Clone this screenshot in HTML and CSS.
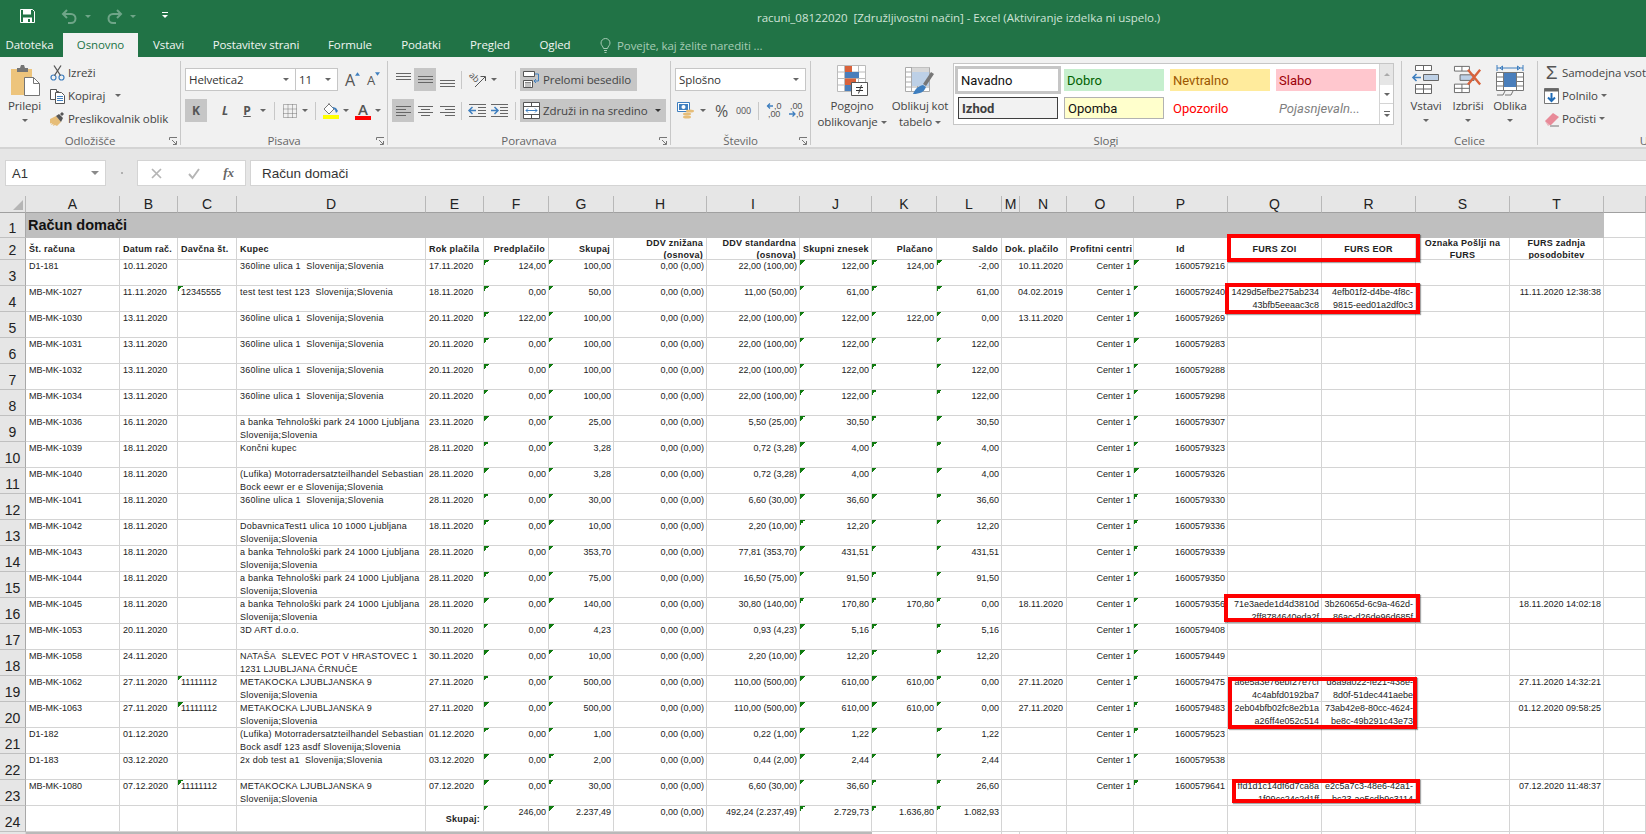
FILE: index.html
```html
<!DOCTYPE html>
<html lang="sl">
<head>
<meta charset="utf-8">
<title>racuni_08122020 - Excel</title>
<link rel="stylesheet" href="styles.css">
</head>
<body>
<header class="titlebar">
  <svg class="qa-save" viewBox="0 0 15 14"><path d="M.5.500h12l2 2v11H.5z" fill="none" stroke="#fff"/><path d="M3 .5h8v5H3zM3 8.500h9v5H3z" fill="#fff"/><path d="M8 10h2v3H8z" fill="#217346"/></svg>
  <svg class="qa-undo" viewBox="0 0 15 14"><path d="M5 1 1 5l4 4M1.500 5H9a4.500 4.500 0 0 1 0 9H6" fill="none" stroke="#6fa588" stroke-width="2"/></svg>
  <i class="caret dim"></i>
  <svg class="qa-redo" viewBox="0 0 15 14"><path d="m10 1 4 4-4 4M13.500 5H6a4.500 4.500 0 0 0 0 9h3" fill="none" stroke="#6fa588" stroke-width="2"/></svg>
  <i class="caret dim"></i>
  <svg class="qa-more" viewBox="0 0 7 7"><path d="M0 .5h6" stroke="#fff"/><path d="m0 3 3 3 3-3z" fill="#fff"/></svg>
  <div class="doc-title">racuni_08122020&nbsp; [Združljivostni način] - Excel (Aktiviranje izdelka ni uspelo.)</div>
</header>

<nav class="tabs">
  <span class="tab">Datoteka</span>
  <span class="tab active">Osnovno</span>
  <span class="tab">Vstavi</span>
  <span class="tab">Postavitev strani</span>
  <span class="tab">Formule</span>
  <span class="tab">Podatki</span>
  <span class="tab">Pregled</span>
  <span class="tab">Ogled</span>
  <span class="tell">
    <svg class="bulb" viewBox="0 0 11 15"><path d="M3.500 10.500C3 8 1 7.500 1 5a4.500 4.500 0 0 1 9 0c0 2.500-2 3-2.500 5.500zM4 12.500h3M4.500 14.500h2" fill="none" stroke="#a6cbb5"/></svg>
    Povejte, kaj želite narediti ...
  </span>
</nav>

<section class="ribbon">
  <div class="grp g-clip">
    <div class="body">
      <div class="big-btn paste">
        <svg class="ic-paste" viewBox="0 0 30 31"><path d="M0 4h21v26H0z" fill="#edc47c"/><path d="M6 3h3l1-3h3l1 3h3v4H6z" fill="#757575"/><path d="M13.500 12.500h9l6 6v12h-15z" fill="#fff" stroke="#757575"/><path d="M22.500 12.500v6h6" fill="none" stroke="#757575"/></svg>
        <span>Prilepi</span>
        <i class="caret low"></i>
      </div>
      <ul class="clip-list">
        <li><svg class="ic15" viewBox="0 0 15 16"><circle cx="3.500" cy="12.500" r="2.500" fill="none" stroke="#3f7fbf" stroke-width="1.200"/><circle cx="11.500" cy="12.500" r="2.500" fill="none" stroke="#3f7fbf" stroke-width="1.200"/><path d="M4.500 10.500 11 .5M10.500 10.500 4 .5" stroke="#555" stroke-width="1.300"/></svg>Izreži</li>
        <li><svg class="ic15" viewBox="0 0 15 16"><path d="M.5 1.500h6v2h2v8h-8z" fill="#fff" stroke="#555"/><path d="M5.500 4.500h6l3 3v8h-9z" fill="#fff" stroke="#555"/><path d="M7 8.500h6M7 10.500h6M7 12.500h6" stroke="#3f7fbf"/></svg>Kopiraj <i class="caret wide"></i></li>
        <li><svg class="ic15" viewBox="0 0 15 16"><path d="M0 8 6 5l5 6-4 4-2-1-2 1 .5-2L1 14l1-2-2 .5z" fill="#e6bd78"/><path d="m6 5 3-2 4 4-2 4z" fill="#555"/><path d="m10 3 2-2 2 2-2 2z" fill="#555"/></svg>Preslikovalnik oblik</li>
      </ul>
    </div>
    <div class="label"><span></span><span>Odložišče</span><svg class="launch" viewBox="0 0 8 8"><path d="M.5 3V.5H8M3 3l4 4M4 7.500h3.500V4" fill="none" stroke="#777"/></svg></div>
  </div>

  <div class="grp g-font">
    <div class="body stack">
      <div class="line">
        <div class="combo fontname">Helvetica2<i class="caret"></i></div>
        <div class="combo fontsize">11<i class="caret"></i></div>
        <span class="abc grow">A<svg viewBox="0 0 6 4"><path d="M0 4 3 0l3 4z" fill="#3f7fbf"/></svg></span>
        <span class="abc shrink">A<svg viewBox="0 0 6 4"><path d="M0 0h6L3 4z" fill="#3f7fbf"/></svg></span>
      </div>
      <div class="line">
        <b class="sq on">K</b><b class="sq ital">L</b><b class="sq under">P</b><i class="caret m2"></i><s class="sep s-a"></s>
        <svg class="ic-border" viewBox="0 0 14 14"><path d="M.5.500h13v13H.5zM.5 5h13M.5 9.500h13M5 .500v13M9.500.500v13" fill="none" stroke="#777" stroke-dasharray="1 1"/></svg>
        <i class="caret m5"></i><s class="sep s-b"></s>
        <span class="fill"><svg viewBox="0 0 16 12"><path d="M6 1 1 6l5 5 5-5zM6 1V0" fill="#fff" stroke="#777"/><path d="m9 4 3 3 1 3 2-2-2-3-3-1z" fill="#3f7fbf"/></svg><em class="bar yellow"></em></span>
        <i class="caret m4"></i>
        <span class="fcolor">A<em class="bar red"></em></span>
        <i class="caret m4"></i>
      </div>
    </div>
    <div class="label"><span></span><span>Pisava</span><svg class="launch" viewBox="0 0 8 8"><path d="M.5 3V.5H8M3 3l4 4M4 7.500h3.500V4" fill="none" stroke="#777"/></svg></div>
  </div>

  <div class="grp g-align">
    <div class="body stack">
      <div class="line">
        <span class="cell22"><svg class="ic-al" viewBox="0 0 15 16"><path d="M0 1.500h15M0 4.500h15M0 7.500h15" stroke="#666"/></svg></span>
        <span class="cell22 on"><svg class="ic-al" viewBox="0 0 15 16"><path d="M0 4.500h15M0 7.500h15M0 10.500h15" stroke="#666"/></svg></span>
        <span class="cell22"><svg class="ic-al" viewBox="0 0 15 16"><path d="M0 8.500h15M0 11.500h15M0 14.500h15" stroke="#666"/></svg></span>
        <s class="sep s-c"></s>
        <svg class="ic-orient" viewBox="0 0 17 16"><text x="1" y="6" transform="rotate(45 3 3)" class="svgtxt">ab</text><path d="M6 15 16 5M11.500 4.500h5V9" fill="none" stroke="#555"/></svg>
        <i class="caret m5"></i>
        <s class="sep s-d"></s>
        <span class="wide-btn wrap"><svg class="ic-wrap" viewBox="0 0 17 17"><path d="M.5.500h11v5H.5zM.5 9.500h9v7H.5z" fill="#fff" stroke="#555"/><path d="M2 13h6M2 11.500h6M2 15h6" stroke="#555" stroke-width=".7"/><path d="M12 3h3.500v7H11m2-2-2 2 2 2" fill="none" stroke="#3f7fbf"/></svg>Prelomi besedilo</span>
      </div>
      <div class="line">
        <span class="cell22 on"><svg class="ic-al" viewBox="0 0 15 16"><path d="M0 3.500h15M0 6.500h10M0 9.500h15M0 12.500h10" stroke="#666"/></svg></span>
        <span class="cell22"><svg class="ic-al" viewBox="0 0 15 16"><path d="M0 3.500h15M3 6.500h9M0 9.500h15M3 12.500h9" stroke="#666"/></svg></span>
        <span class="cell22"><svg class="ic-al" viewBox="0 0 15 16"><path d="M0 3.500h15M5 6.500h10M0 9.500h15M5 12.500h10" stroke="#666"/></svg></span>
        <s class="sep s-c"></s>
        <svg class="ic-ind" viewBox="0 0 17 15"><path d="M0 1.500h17M9 4.500h8M9 7.500h8M9 10.500h8M0 13.500h17" stroke="#666"/><path d="M0 7.500h7M3.500 4 0 7.500 3.500 11" fill="none" stroke="#3f7fbf" stroke-width="1.500"/></svg>
        <svg class="ic-ind r" viewBox="0 0 17 15"><path d="M0 1.500h17M9 4.500h8M9 7.500h8M9 10.500h8M0 13.500h17" stroke="#666"/><path d="M0 7.500h7M3.500 4 7 7.500 3.500 11" fill="none" stroke="#3f7fbf" stroke-width="1.500"/></svg>
        <s class="sep s-e"></s>
        <span class="wide-btn merge"><svg class="ic-wrap" viewBox="0 0 17 17"><path d="M.5.500h16v16H.5zM.5 4.500h16M.5 12.500h16M8.500.500v4M8.500 12.500v4" fill="#fff" stroke="#555"/><path d="M3 8.500h11M5 6.500l-2 2 2 2M12 6.500l2 2-2 2" fill="none" stroke="#3f7fbf"/></svg>Združi in na sredino<i class="caret dark"></i></span>
      </div>
    </div>
    <div class="label"><span></span><span>Poravnava</span><svg class="launch" viewBox="0 0 8 8"><path d="M.5 3V.5H8M3 3l4 4M4 7.500h3.500V4" fill="none" stroke="#777"/></svg></div>
  </div>

  <div class="grp g-num">
    <div class="body stack">
      <div class="line">
        <div class="combo numfmt">Splošno<i class="caret"></i></div>
      </div>
      <div class="line">
        <svg class="ic-acc" viewBox="0 0 18 17"><path d="M.5.500h12v9H.5z" fill="#fff" stroke="#3f7fbf"/><path d="M2 2h9v6H2z" fill="#3f7fbf"/><circle cx="6.500" cy="5" r="2" fill="#fff"/><ellipse cx="13" cy="9" rx="4" ry="1.500" fill="#e6bd78"/><ellipse cx="10" cy="12" rx="4" ry="1.500" fill="#e6bd78"/><ellipse cx="10" cy="15" rx="4" ry="1.500" fill="#e6bd78"/></svg>
        <i class="caret m5"></i>
        <span class="pct">%</span>
        <span class="thou">000</span>
        <s class="sep s-f"></s>
        <svg class="ic-dec" viewBox="0 0 15 17"><text x="7" y="7" class="svgnum">,0</text><text x="1" y="15" class="svgnum">,00</text><path d="M0 4h6M3 1.500 .5 4 3 6.500" fill="none" stroke="#3f7fbf" stroke-width="1.300"/></svg>
        <svg class="ic-dec r" viewBox="0 0 15 17"><text x="1" y="7" class="svgnum">,00</text><text x="7" y="15" class="svgnum">,0</text><path d="M0 12h6M3.500 9.500 6 12l-2.500 2.500" fill="none" stroke="#3f7fbf" stroke-width="1.300"/></svg>
      </div>
    </div>
    <div class="label"><span></span><span>Število</span><svg class="launch" viewBox="0 0 8 8"><path d="M.5 3V.5H8M3 3l4 4M4 7.500h3.500V4" fill="none" stroke="#777"/></svg></div>
  </div>

  <div class="grp g-styles">
    <div class="body">
      <div class="big-btn cond">
        <svg class="ic-cond" viewBox="0 0 31 31"><path d="M.5.500h28v26H.5zM.5 7h28M.5 13.500h28M.5 20h28M7.500.500v26M21.500.500v26" fill="#fff" stroke="#bbb"/><path d="M8 1h7v6H8z" fill="#d9623b"/><path d="M8 7h14v6H8z" fill="#4a7ebb"/><path d="M8 13.500h11V20H8z" fill="#d9623b"/><path d="M8 20h6v6H8z" fill="#4a7ebb"/><path d="M14.500 17.500h16v13h-16z" fill="#fff" stroke="#555"/><path d="M19 22.500h7M19 25.500h7M24.500 20l-3 8.500" stroke="#333" fill="none"/></svg>
        <span>Pogojno</span>
        <span>oblikovanje<i class="caret tight"></i></span>
      </div>
      <div class="big-btn tbl">
        <svg class="ic-tbl" viewBox="0 0 30 28"><path d="M.5.500h24v24H.5zM.5 5h24M.5 10h24M.5 15h24M.5 20h24M6.500.500v24M12.500.500v24M18.500.500v24" fill="#fff" stroke="#aaa"/><path d="M7 5h17v14H7z" fill="#bdd0e6"/><path d="M7 .500h17V5H7z" fill="#d8d8d8"/><path d="m18 17 8-12 3 2-8 12z" fill="#777"/><path d="M8 27c2-5 5-8 10-9l3 2c-2 5-6 7-13 7z" fill="#3f7fbf"/></svg>
        <span>Oblikuj kot</span>
        <span>tabelo<i class="caret tight"></i></span>
      </div>
      <div class="gallery">
        <div class="swatches">
          <span class="sw normal">Navadno</span>
          <span class="sw good">Dobro</span>
          <span class="sw neutral">Nevtralno</span>
          <span class="sw bad">Slabo</span>
          <span class="sw output">Izhod</span>
          <span class="sw note">Opomba</span>
          <span class="sw warn">Opozorilo</span>
          <span class="sw expl">Pojasnjevaln...</span>
        </div>
        <div class="scroller">
          <span class="up"><i class="caret flip pale"></i></span>
          <span class="dn"><i class="caret"></i></span>
          <span class="mr"><em class="dash"></em><i class="caret"></i></span>
        </div>
      </div>
    </div>
    <div class="label plain">Slogi</div>
  </div>

  <div class="grp g-cells">
    <div class="body">
      <div class="big-btn cellbtn">
        <svg class="ic-cell" viewBox="0 0 28 30"><path d="M3.500 1.500h16v5h-16zM11.500 1.500v5M3.500 20.500h16v9h-16zM3.500 25h16M11.500 20.500v9" fill="#fff" stroke="#666"/><path d="M11.500 10.500h15v6h-15z" fill="#bdd0e6" stroke="#666"/><path d="M1 13.500h8M4.500 10 1 13.500 4.500 17" fill="none" stroke="#3f7fbf" stroke-width="1.600"/></svg>
        <span>Vstavi</span><i class="caret low"></i>
      </div>
      <div class="big-btn cellbtn">
        <svg class="ic-cell" viewBox="0 0 30 30"><path d="M.5 1.500h16v5H.5zM8.500 1.500v5M.5 20.500h16v9H.5zM.5 25h16M8.500 20.500v9" fill="#fff" stroke="#666"/><path d="M6.500 10.500h15v6h-15z" fill="#bdd0e6" stroke="#666"/><path d="m15 5 13 16M28 5 15 21" stroke="#d9623b" stroke-width="2.500"/></svg>
        <span>Izbriši</span><i class="caret low"></i>
      </div>
      <div class="big-btn cellbtn">
        <svg class="ic-shape" viewBox="0 0 28 32"><path d="M1 4h26M1 1v6M27 1v6M4 4 6.500 2v4zM24 4l-2.500-2v4z" fill="none" stroke="#3f7fbf"/><path d="M.5 8.500h27v18H.5zM.5 13h27M.5 17.500h27M.5 22h27M7.500 8.500v18M20.500 8.500v18" fill="#fff" stroke="#777"/><path d="M8 9h12v14H8z" fill="#4a7ebb"/><path d="M1 31h6l2-4M9 31h6l2-4" fill="none" stroke="#777"/></svg>
        <span>Oblika</span><i class="caret low"></i>
      </div>
    </div>
    <div class="label plain">Celice</div>
  </div>

  <div class="grp g-edit">
    <div class="body">
      <ul class="edit-list">
        <li><span class="sigma">Σ</span>Samodejna vsota</li>
        <li><svg class="ic15" viewBox="0 0 15 16"><path d="M.5.500h14v15H.5z" fill="#fff" stroke="#777"/><path d="M.5.500h14v3H.5z" fill="#666"/><path d="M7.500 5v8M4 9.500l3.500 3.500L11 9.500" fill="none" stroke="#1f6bb5" stroke-width="2"/></svg>Polnilo<i class="caret tight"></i></li>
        <li><svg class="ic15" viewBox="0 0 15 16"><path d="M1 10 9 2l6 4-8 8H4z" fill="#e88a98"/><path d="M1 10l5 4-2 1z" fill="#e9b8bf"/><path d="M6 15h9" stroke="#777"/></svg>Počisti<i class="caret tight"></i></li>
      </ul>
    </div>
    <div class="label plain">Urejanje</div>
  </div>
</section>

<section class="fbar">
  <div class="namebox">A1<i class="caret"></i></div>
  <div class="dots"></div>
  <div class="fx-box">
    <svg class="ic-x" viewBox="0 0 11 11"><path d="m1 1 9 9M10 1l-9 9" stroke="#b5b5b5" stroke-width="1.700"/></svg>
    <svg class="ic-v" viewBox="0 0 12 11"><path d="m1 6 3.500 4L11 1" fill="none" stroke="#b5b5b5" stroke-width="1.900"/></svg>
    <span class="fx">fx</span>
  </div>
  <div class="finput">Račun domači</div>
</section>

<main class="sheet">
  <div class="row colhead">
    <div class="corner"><svg viewBox="0 0 10 10"><path d="M10 0v10H0z" fill="#b5b5b5"/></svg></div>
    <div>A</div><div>B</div><div>C</div><div>D</div><div>E</div><div>F</div><div>G</div><div>H</div><div>I</div><div>J</div><div>K</div><div>L</div><div>M</div><div>N</div><div>O</div><div>P</div><div>Q</div><div>R</div><div>S</div><div>T</div><div></div>
  </div>
  <div class="row title">
    <div class="rh">1</div>
    <div class="banner">Račun domači</div>
    <div></div>
  </div>
  <div class="row heads">
    <div class="rh">2</div>
    <div>Št. računa</div><div>Datum rač.</div><div>Davčna št.</div><div>Kupec</div><div>Rok plačila</div><div>Predplačilo</div><div>Skupaj</div><div>DDV znižana<br>(osnova)</div><div>DDV standardna<br>(osnova)</div><div>Skupni znesek</div><div>Plačano</div><div>Saldo</div><div>Dok. plačilo</div><div>Profitni centri</div><div>Id</div><div>FURS ZOI</div><div>FURS EOR</div><div>Oznaka Pošlji na<br>FURS</div><div>FURS zadnja<br>posodobitev</div><div></div>
  </div>

  <div class="row d"><div class="rh">3</div><div>D1-181</div><div>10.11.2020</div><div></div><div>360line ulica 1&nbsp; Slovenija;Slovenia</div><div>17.11.2020</div><div>124,00</div><div>100,00</div><div>0,00 (0,00)</div><div>22,00 (100,00)</div><div>122,00</div><div>124,00</div><div>-2,00</div><div>10.11.2020</div><div>Center 1</div><div>1600579216</div><div></div><div></div><div></div><div></div><div></div></div>
  <div class="row d"><div class="rh">4</div><div>MB-MK-1027</div><div>11.11.2020</div><div class="t">12345555</div><div>test test test 123&nbsp; Slovenija;Slovenia</div><div>18.11.2020</div><div>0,00</div><div>50,00</div><div>0,00 (0,00)</div><div>11,00 (50,00)</div><div>61,00</div><div></div><div>61,00</div><div>04.02.2019</div><div>Center 1</div><div>1600579240</div><div>1429d5efbe275ab234<br>43bfb5eeaac3c8</div><div>4efb01f2-d4be-4f8c-<br>9815-eed01a2df0c3</div><div></div><div>11.11.2020 12:38:38</div><div></div></div>
  <div class="row d"><div class="rh">5</div><div>MB-MK-1030</div><div>13.11.2020</div><div></div><div>360line ulica 1&nbsp; Slovenija;Slovenia</div><div>20.11.2020</div><div>122,00</div><div>100,00</div><div>0,00 (0,00)</div><div>22,00 (100,00)</div><div>122,00</div><div>122,00</div><div>0,00</div><div>13.11.2020</div><div>Center 1</div><div>1600579269</div><div></div><div></div><div></div><div></div><div></div></div>
  <div class="row d"><div class="rh">6</div><div>MB-MK-1031</div><div>13.11.2020</div><div></div><div>360line ulica 1&nbsp; Slovenija;Slovenia</div><div>20.11.2020</div><div>0,00</div><div>100,00</div><div>0,00 (0,00)</div><div>22,00 (100,00)</div><div>122,00</div><div></div><div>122,00</div><div></div><div>Center 1</div><div>1600579283</div><div></div><div></div><div></div><div></div><div></div></div>
  <div class="row d"><div class="rh">7</div><div>MB-MK-1032</div><div>13.11.2020</div><div></div><div>360line ulica 1&nbsp; Slovenija;Slovenia</div><div>20.11.2020</div><div>0,00</div><div>100,00</div><div>0,00 (0,00)</div><div>22,00 (100,00)</div><div>122,00</div><div></div><div>122,00</div><div></div><div>Center 1</div><div>1600579288</div><div></div><div></div><div></div><div></div><div></div></div>
  <div class="row d"><div class="rh">8</div><div>MB-MK-1034</div><div>13.11.2020</div><div></div><div>360line ulica 1&nbsp; Slovenija;Slovenia</div><div>20.11.2020</div><div>0,00</div><div>100,00</div><div>0,00 (0,00)</div><div>22,00 (100,00)</div><div>122,00</div><div></div><div>122,00</div><div></div><div>Center 1</div><div>1600579298</div><div></div><div></div><div></div><div></div><div></div></div>
  <div class="row d"><div class="rh">9</div><div>MB-MK-1036</div><div>16.11.2020</div><div></div><div>a banka Tehnološki park 24 1000 Ljubljana<br>Slovenija;Slovenia</div><div>23.11.2020</div><div>0,00</div><div>25,00</div><div>0,00 (0,00)</div><div>5,50 (25,00)</div><div>30,50</div><div></div><div>30,50</div><div></div><div>Center 1</div><div>1600579307</div><div></div><div></div><div></div><div></div><div></div></div>
  <div class="row d"><div class="rh">10</div><div>MB-MK-1039</div><div>18.11.2020</div><div></div><div>Končni kupec</div><div>28.11.2020</div><div>0,00</div><div>3,28</div><div>0,00 (0,00)</div><div>0,72 (3,28)</div><div>4,00</div><div></div><div>4,00</div><div></div><div>Center 1</div><div>1600579323</div><div></div><div></div><div></div><div></div><div></div></div>
  <div class="row d"><div class="rh">11</div><div>MB-MK-1040</div><div>18.11.2020</div><div></div><div>(Lufika) Motorradersatzteilhandel Sebastian<br>Bock eewr er e Slovenija;Slovenia</div><div>28.11.2020</div><div>0,00</div><div>3,28</div><div>0,00 (0,00)</div><div>0,72 (3,28)</div><div>4,00</div><div></div><div>4,00</div><div></div><div>Center 1</div><div>1600579326</div><div></div><div></div><div></div><div></div><div></div></div>
  <div class="row d"><div class="rh">12</div><div>MB-MK-1041</div><div>18.11.2020</div><div></div><div>360line ulica 1&nbsp; Slovenija;Slovenia</div><div>28.11.2020</div><div>0,00</div><div>30,00</div><div>0,00 (0,00)</div><div>6,60 (30,00)</div><div>36,60</div><div></div><div>36,60</div><div></div><div>Center 1</div><div>1600579330</div><div></div><div></div><div></div><div></div><div></div></div>
  <div class="row d"><div class="rh">13</div><div>MB-MK-1042</div><div>18.11.2020</div><div></div><div>DobavnicaTest1 ulica 10 1000 Ljubljana<br>Slovenija;Slovenia</div><div>18.11.2020</div><div>0,00</div><div>10,00</div><div>0,00 (0,00)</div><div>2,20 (10,00)</div><div>12,20</div><div></div><div>12,20</div><div></div><div>Center 1</div><div>1600579336</div><div></div><div></div><div></div><div></div><div></div></div>
  <div class="row d"><div class="rh">14</div><div>MB-MK-1043</div><div>18.11.2020</div><div></div><div>a banka Tehnološki park 24 1000 Ljubljana<br>Slovenija;Slovenia</div><div>28.11.2020</div><div>0,00</div><div>353,70</div><div>0,00 (0,00)</div><div>77,81 (353,70)</div><div>431,51</div><div></div><div>431,51</div><div></div><div>Center 1</div><div>1600579339</div><div></div><div></div><div></div><div></div><div></div></div>
  <div class="row d"><div class="rh">15</div><div>MB-MK-1044</div><div>18.11.2020</div><div></div><div>a banka Tehnološki park 24 1000 Ljubljana<br>Slovenija;Slovenia</div><div>28.11.2020</div><div>0,00</div><div>75,00</div><div>0,00 (0,00)</div><div>16,50 (75,00)</div><div>91,50</div><div></div><div>91,50</div><div></div><div>Center 1</div><div>1600579350</div><div></div><div></div><div></div><div></div><div></div></div>
  <div class="row d"><div class="rh">16</div><div>MB-MK-1045</div><div>18.11.2020</div><div></div><div>a banka Tehnološki park 24 1000 Ljubljana<br>Slovenija;Slovenia</div><div>28.11.2020</div><div>0,00</div><div>140,00</div><div>0,00 (0,00)</div><div>30,80 (140,00)</div><div>170,80</div><div>170,80</div><div>0,00</div><div>18.11.2020</div><div>Center 1</div><div>1600579356</div><div>71e3aede1d4d3810d<br>2ff8784640eda2f</div><div>3b26065d-6c9a-462d-<br>86ac-d26de96d685f</div><div></div><div>18.11.2020 14:02:18</div><div></div></div>
  <div class="row d"><div class="rh">17</div><div>MB-MK-1053</div><div>20.11.2020</div><div></div><div>3D ART d.o.o.</div><div>30.11.2020</div><div>0,00</div><div>4,23</div><div>0,00 (0,00)</div><div>0,93 (4,23)</div><div>5,16</div><div></div><div>5,16</div><div></div><div>Center 1</div><div>1600579408</div><div></div><div></div><div></div><div></div><div></div></div>
  <div class="row d"><div class="rh">18</div><div>MB-MK-1058</div><div>24.11.2020</div><div></div><div>NATAŠA&nbsp; SLEVEC POT V HRASTOVEC 1<br>1231 LJUBLJANA ČRNUČE</div><div>30.11.2020</div><div>0,00</div><div>10,00</div><div>0,00 (0,00)</div><div>2,20 (10,00)</div><div>12,20</div><div></div><div>12,20</div><div></div><div>Center 1</div><div>1600579449</div><div></div><div></div><div></div><div></div><div></div></div>
  <div class="row d"><div class="rh">19</div><div>MB-MK-1062</div><div>27.11.2020</div><div class="t">11111112</div><div>METAKOCKA LJUBLJANSKA 9<br>Slovenija;Slovenia</div><div>27.11.2020</div><div>0,00</div><div>500,00</div><div>0,00 (0,00)</div><div>110,00 (500,00)</div><div>610,00</div><div>610,00</div><div>0,00</div><div>27.11.2020</div><div>Center 1</div><div>1600579475</div><div>a6e5a3e76ebf27e7cf<br>4c4abfd0192ba7</div><div>d8a9a022-fe21-438e-<br>8d0f-51dec441aebe</div><div></div><div>27.11.2020 14:32:21</div><div></div></div>
  <div class="row d"><div class="rh">20</div><div>MB-MK-1063</div><div>27.11.2020</div><div class="t">11111112</div><div>METAKOCKA LJUBLJANSKA 9<br>Slovenija;Slovenia</div><div>27.11.2020</div><div>0,00</div><div>500,00</div><div>0,00 (0,00)</div><div>110,00 (500,00)</div><div>610,00</div><div>610,00</div><div>0,00</div><div>27.11.2020</div><div>Center 1</div><div>1600579483</div><div>2eb04bfb02fc8e2b1a<br>a26ff4e052c514</div><div>73ab42e8-80cc-4624-<br>be8c-49b291c43e73</div><div></div><div>01.12.2020 09:58:25</div><div></div></div>
  <div class="row d"><div class="rh">21</div><div>D1-182</div><div>01.12.2020</div><div></div><div>(Lufika) Motorradersatzteilhandel Sebastian<br>Bock asdf 123 asdf Slovenija;Slovenia</div><div>01.12.2020</div><div>0,00</div><div>1,00</div><div>0,00 (0,00)</div><div>0,22 (1,00)</div><div>1,22</div><div></div><div>1,22</div><div></div><div>Center 1</div><div>1600579523</div><div></div><div></div><div></div><div></div><div></div></div>
  <div class="row d"><div class="rh">22</div><div>D1-183</div><div>03.12.2020</div><div></div><div>2x dob test a1&nbsp; Slovenija;Slovenia</div><div>03.12.2020</div><div>0,00</div><div>2,00</div><div>0,00 (0,00)</div><div>0,44 (2,00)</div><div>2,44</div><div></div><div>2,44</div><div></div><div>Center 1</div><div>1600579538</div><div></div><div></div><div></div><div></div><div></div></div>
  <div class="row d"><div class="rh">23</div><div>MB-MK-1080</div><div>07.12.2020</div><div class="t">11111112</div><div>METAKOCKA LJUBLJANSKA 9<br>Slovenija;Slovenia</div><div>07.12.2020</div><div>0,00</div><div>30,00</div><div>0,00 (0,00)</div><div>6,60 (30,00)</div><div>36,60</div><div></div><div>26,60</div><div></div><div>Center 1</div><div>1600579641</div><div>ffd1d1c14df6d7ca8a<br>1f09cc24c2d1ff</div><div>e2c5a7c3-48e6-42a1-<br>bc23-ae5cdb9c3114</div><div></div><div>07.12.2020 11:48:37</div><div></div></div>
  <div class="row d sum"><div class="rh">24</div><div></div><div></div><div></div><div></div><div>Skupaj:</div><div>246,00</div><div>2.237,49</div><div>0,00 (0,00)</div><div>492,24 (2.237,49)</div><div>2.729,73</div><div>1.636,80</div><div>1.082,93</div><div></div><div></div><div></div><div></div><div></div><div></div><div></div><div></div></div>
  <div class="row end"><div></div><div></div><div></div><div></div><div></div><div></div><div></div><div></div><div></div><div></div><div></div><div></div><div></div><div></div><div></div><div></div><div></div><div></div><div></div><div></div><div></div><div></div></div>

  <div class="mark m1"></div>
  <div class="mark m2x"></div>
  <div class="mark m3"></div>
  <div class="mark m4x"></div>
  <div class="mark m5x"></div>
</main>
</body>
</html>
```
FILE: styles.css
```css
* { box-sizing: border-box; }
html, body { margin: 0; padding: 0; }
body {
  width: 1646px; height: 834px; overflow: hidden;
  background: #e6e6e6;
  font-family: "Open Sans", "Liberation Sans", sans-serif;
  font-size: 11.500px; letter-spacing: -.1px; color: #444;
}
svg { display: block; flex: none; overflow: visible; }
ul { list-style: none; margin: 0; padding: 0; }
i, em, s { display: block; font-style: normal; text-decoration: none; }

.caret {
  width: 0; height: 0; flex: none; display: inline-block;
  border-left: 3px solid transparent; border-right: 3px solid transparent;
  border-top: 3px solid #666;
}
.caret.dim { border-top-color: #6fa588; margin-left: 8px; }
.caret.low { margin-top: 5px; }
.caret.wide { margin-left: 10px; vertical-align: middle; }
.caret.tight { margin-left: 3px; vertical-align: middle; }
.caret.m2 { margin-left: 2px; }
.caret.m4 { margin-left: 4px; }
.caret.m5 { margin-left: 5px; }
.caret.flip { border-top: 0; border-bottom: 3px solid #666; }
.caret.pale { border-bottom-color: #aaa; }
.caret.dark { border-top-color: #333; margin-left: auto; margin-right: 5px; }

/* title bar */
.titlebar {
  height: 33px; background: #217346; display: flex; align-items: center;
  padding-left: 20px; color: #cfe3d7;
}
.qa-save { width: 15px; height: 14px; margin-top: -2px; }
.qa-undo { width: 15px; height: 14px; margin-left: 27px; margin-top: -2px; }
.qa-redo { width: 15px; height: 14px; margin-left: 16px; margin-top: -2px; }
.qa-more { width: 7px; height: 7px; margin-left: 26px; margin-top: -2px; }
.doc-title { margin-left: 588px; letter-spacing: -.04px; margin-top: 1px; }

/* tabs */
.tabs {
  height: 24px; background: #217346; display: grid;
  grid-template-columns: 63px 75px 61px 114px 74px 68px 70px 60px auto;
  align-items: center; color: #f0f6f2;
}
.tab { text-align: center; line-height: 24px; }
.tab:first-child { padding-right: 4px; }
.tab.active { background: #f1f1f1; color: #217346; }
.tell { display: flex; align-items: center; padding-left: 15px; color: #a6cbb5; }
.bulb { width: 11px; height: 15px; margin-right: 6px; }

/* ribbon */
.ribbon {
  height: 92px; background: #f1f1f1; border-bottom: 2px solid #d4d4d4;
  display: flex; overflow: hidden;
}
.grp {
  height: 84px; margin-top: 4px; display: flex; flex-direction: column; flex: none;
  border-right: 1px solid #c8c8c8;
}
.g-clip { width: 181px; }
.g-font { width: 207px; }
.g-align { width: 283px; }
.g-num { width: 140px; }
.g-styles { width: 591px; }
.g-cells { width: 136px; }
.g-edit { width: 248px; border-right: 0; }
.body { flex: 1; display: flex; min-height: 0; }
.stack { flex-direction: column; gap: 8px; padding-top: 7px; }
.line { display: flex; align-items: center; height: 23px; }
.label {
  height: 14px; line-height: 14px; margin-bottom: -3px; color: #666;
  display: grid; grid-template-columns: 1fr auto 1fr; align-items: center;
}
.label.plain { display: block; text-align: center; }
.launch { width: 8px; height: 8px; justify-self: end; margin-right: 3px; }
.sep { width: 1px; height: 18px; background: #c8c8c8; flex: none; }

.big-btn { display: flex; flex-direction: column; align-items: center; flex: none; line-height: 16px; }
.big-btn span { white-space: nowrap; }
.paste { width: 49px; padding-top: 4px; }
.ic-paste { width: 30px; height: 31px; margin-bottom: 2px; margin-left: 3px; }
.clip-list { margin-left: 1px; }
.clip-list li, .edit-list li { height: 23px; display: flex; align-items: center; white-space: nowrap; }
.ic15 { width: 15px; height: 16px; margin-right: 3px; }

/* font group */
.g-font .stack { padding-left: 4px; }
.combo {
  height: 23px; background: #fff; border: 1px solid #c6c6c6; display: flex; align-items: center;
  padding: 0 6px 0 3px; justify-content: space-between; color: #333; flex: none;
}
.fontname { width: 111px; }
.fontsize { width: 42px; margin-left: 0; border-left: 0; }
.abc { display: flex; align-items: flex-start; font-size: 15px; color: #555; height: 18px; line-height: 19px; }
.abc svg { width: 5px; height: 4px; margin-top: 1px; }
.grow { margin-left: 7px; width: 22px; font-size: 16px; }
.shrink { font-size: 13px; }
.sq { width: 22px; height: 23px; display: flex; align-items: center; justify-content: center; font-size: 12px; font-weight: 700; color: #555; flex: none; }
.sq.on { background: #c6c6c6; }
.sq.ital { font-style: italic; margin-left: 7px; }
.sq.under { text-decoration: underline; }
.s-a { margin-left: 8px; }
.ic-border { width: 14px; height: 14px; margin-left: 8px; }
.s-b { margin-left: 7px; }
.fill { width: 16px; margin-left: 7px; }
.fill svg { width: 16px; height: 12px; }
.bar { height: 4px; width: 16px; }
.yellow { background: #ffff00; }
.red { background: #ff0000; }
.fcolor { width: 16px; margin-left: 6px; font-size: 15px; line-height: 14px; text-align: center; font-weight: 600; color: #555; }

/* align group */
.g-align .stack { padding-left: 4px; }
.cell22 { width: 22px; height: 23px; display: flex; align-items: center; justify-content: center; flex: none; }
.cell22.on { background: #c6c6c6; }
.ic-al { width: 15px; height: 16px; }
.s-c { margin: 0 7px 0 3px; }
.ic-orient { width: 17px; height: 16px; }
.svgtxt { font: 9px "Open Sans", sans-serif; fill: #555; }
.s-d { margin-left: 18px; margin-right: 4px; }
.s-e { margin-left: 7px; margin-right: 4px; }
.wide-btn {
  height: 23px; background: #c6c6c6; display: flex; align-items: center; color: #444; padding-left: 3px; flex: none;
}
.wrap { width: 117px; }
.merge { width: 146px; }
.ic-wrap { width: 17px; height: 17px; margin-right: 3px; }
.ic-ind { width: 17px; height: 15px; }
.ic-ind.r { margin-left: 5px; }

/* number group */
.g-num .stack { padding-left: 4px; }
.numfmt { width: 131px; justify-content: space-between; }
.ic-acc { width: 18px; height: 17px; margin-left: 2px; }
.pct { font-size: 16px; margin-left: 9px; width: 13px; color: #555; }
.thou { font-size: 9px; margin-left: 8px; width: 15px; color: #555; }
.s-f { margin-left: 7px; }
.ic-dec { width: 15px; height: 17px; margin-left: 8px; }
.ic-dec.r { margin-left: 7px; }
.svgnum { font: 9px "Liberation Sans", sans-serif; fill: #555; }

/* styles group */
.cond { width: 78px; margin-left: 2px; padding-top: 4px; }
.tbl { width: 58px; padding-top: 6px; }
.ic-cond { width: 31px; height: 31px; margin-bottom: 2px; }
.ic-tbl { width: 30px; height: 28px; margin-bottom: 3px; }
.gallery {
  width: 441px; height: 62px; margin: 2px 0 0 4px; background: #fff; border: 1px solid #c6c6c6; display: flex; flex: none;
}
.swatches {
  flex: 1; display: grid; grid-template-columns: repeat(4, 100px); grid-auto-rows: 22px;
  gap: 6px; padding: 5px 0 0 4px;
}
.sw { font-family: Roboto, sans-serif; font-size: 13px; letter-spacing: 0; display: flex; align-items: center; padding-left: 3px; }
.normal { outline: 3px solid #c6c6c6; color: #111; }
.good { background: #c6efce; color: #006100; }
.neutral { background: #ffeb9c; color: #9c5700; }
.bad { background: #ffc7ce; color: #9c0006; }
.output { background: #f2f2f2; border: 1px solid #3f3f3f; color: #3f3f3f; font-weight: 700; padding-left: 3px; }
.note { background: #ffffcc; border: 1px solid #b2b2b2; color: #111; padding-left: 3px; }
.warn { color: #ff0000; }
.expl { color: #7f7f7f; font-style: italic; }
.scroller { width: 14px; border-left: 1px solid #d4d4d4; display: grid; grid-template-rows: 21px 19px 20px; flex: none; }
.scroller span { display: flex; flex-direction: column; align-items: center; justify-content: center; gap: 2px; }
.up { background: #e6e6e6; }
.dn { border-bottom: 1px solid #d4d4d4; }
.dash { width: 6px; height: 1px; background: #666; }

/* cells */
.g-cells .body { padding-left: 3px; }
.cellbtn { width: 42px; padding-top: 3px; }
.ic-cell { width: 28px; height: 30px; margin-bottom: 4px; }
.ic-shape { width: 28px; height: 32px; margin-bottom: 2px; }

/* edit */
.edit-list { padding-left: 6px; }
.sigma { width: 15px; margin-right: 3px; font-size: 19px; line-height: 20px; color: #555; font-family: "Liberation Sans", sans-serif; text-align: center; }

/* formula bar */
.fbar { height: 47px; padding: 11px 0 10px 5px; display: flex; }
.namebox {
  width: 101px; background: #fff; border: 1px solid #d4d4d4; display: flex; align-items: center;
  justify-content: space-between; padding: 0 6px 0 6px; font: 13px "Liberation Sans", sans-serif; letter-spacing: 0; color: #333; flex: none;
}
.namebox .caret { border-top-width: 4px; border-left-width: 4px; border-right-width: 4px; border-top-color: #8a8a8a; }
.dots {
  width: 31px; flex: none;
  background: radial-gradient(circle, #b0b0b0 1px, transparent 1.200px) center/2px 4px no-repeat;
}
.fx-box {
  width: 109px; background: #fff; border: 1px solid #d4d4d4; display: grid; grid-template-columns: 37px 37px 33px; align-items: center; justify-items: center; flex: none;
}
.ic-x { width: 11px; height: 11px; }
.ic-v { width: 12px; height: 11px; }
.fx { font: italic 700 13px "Liberation Serif", serif; color: #666; }
.finput {
  flex: 1; margin-left: 4px; background: #fff; border: 1px solid #d4d4d4; border-right: 0;
  padding-left: 11px; display: flex; align-items: center; font: 13.500px "Liberation Sans", sans-serif; color: #333; letter-spacing: 0;
}

/* sheet */
.sheet { position: relative; height: 638px; background: #fff; font-family: "Liberation Sans", sans-serif; font-size: 9px; letter-spacing: 0; color: #222; }
.row {
  display: grid; height: 26px;
  grid-template-columns: 26px 94px 58px 59px 189px 58px 65px 65px 93px 93px 72px 65px 65px 18px 47px 67px 94px 94px 94px 94px 94px 42px;
}
.row > div { border-right: 1px solid #d4d4d4; border-bottom: 1px solid #d4d4d4; overflow: hidden; white-space: nowrap; }
.row > .rh {
  background: #e6e6e6; border-right: 1px solid #a8a8a8; border-bottom: 1px solid #c0c0c0;
  font-size: 14px; font-weight: 400; letter-spacing: 0; line-height: 18px; display: flex; align-items: flex-end; justify-content: center; color: #222;
}

.colhead { height: 17px; }
.colhead > div {
  background: #e6e6e6; border-bottom: 1px solid #a0a0a0; border-right: 1px solid #b8b8b8;
  font-size: 14px; line-height: 16px; text-align: center; color: #222;
}
.corner { display: flex; justify-content: flex-end; align-items: flex-start; padding: 4px 2px 0 0; }
.corner svg { width: 10px; height: 10px; }

.title { height: 25px; grid-template-columns: 26px 1578px 42px; }
.row > .banner {
  background: #bfbfbf; font-size: 14.500px; font-weight: 700; color: #111; line-height: 24px; padding-left: 2px; border: 0;
}

.heads { height: 22px; }
.heads > div {
  font-weight: 700; line-height: 12px; padding: 0 3px; display: grid; align-content: center; letter-spacing: .25px;
}
.heads > div:nth-child(n+7):nth-child(-n+13) { text-align: right; padding-right: 3px; }
.heads > div:nth-child(14) { grid-column: span 2; text-align: center; padding-right: 8px; }
.heads > div:nth-child(n+15) { text-align: center; }

.d > div { line-height: 12.500px; padding: 0 3px; }
.d > div:nth-child(5) { letter-spacing: .22px; }
.d > div:nth-child(n+7):nth-child(-n+13),
.d > div:nth-child(n+15) { text-align: right; padding: 0 2px; }
.d > div:nth-child(14) { grid-column: span 2; text-align: right; padding: 0 3px 0 0; }
.d > div:nth-child(7), .d > div:nth-child(8), .d > div:nth-child(11),
.d > div:nth-child(12), .d > div:nth-child(13), .d > div:nth-child(16), .d > .t {
  background: linear-gradient(135deg, #0f7b0f 50%, transparent 50%) 0 0 / 5px 5px no-repeat;
}
.sum > div { padding-top: 5px; }
.sum > div:nth-child(6) { text-align: right; font-weight: 700; padding-top: 7px; letter-spacing: .25px; }
.sum > div:nth-child(16) { background: none; }

.end { height: 2px; }
.end > div { border-bottom: 0; }
.end > div:first-child { background: #e6e6e6; }
.end > div:nth-child(n+2):nth-child(-n+11) { background: #b9b9b9; border: 0; }

.mark { position: absolute; border: 4px solid #fe0000; box-shadow: 1px 1px 1px rgba(0, 0, 0, .35); }
.m1 { left: 1227px; top: 38px; width: 193px; height: 28px; }
.m2x { left: 1225px; top: 87px; width: 195px; height: 31px; }
.m3 { left: 1224px; top: 398px; width: 196px; height: 28px; }
.m4x { left: 1228px; top: 481px; width: 189px; height: 52px; }
.m5x { left: 1232px; top: 583px; width: 188px; height: 24px; }
```
